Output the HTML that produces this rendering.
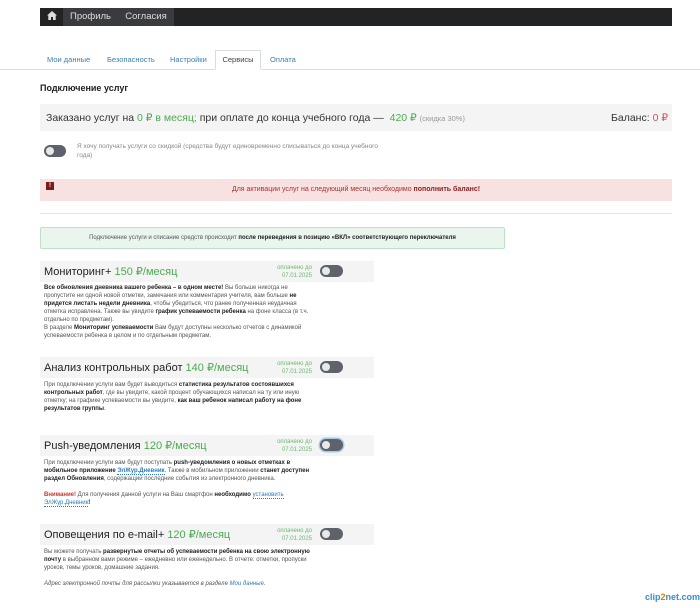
<!DOCTYPE html>
<html><head><meta charset="utf-8"><style>
*{box-sizing:border-box;margin:0;padding:0}
body{width:700px;height:608px;background:#fff;font-family:"Liberation Sans",sans-serif;color:#333;position:relative;overflow:hidden}
.a{position:absolute}
.nav{left:40px;top:8px;width:632px;height:18px;background:#222325}
.nav span{position:absolute;top:0;height:18px;line-height:18px;color:#ddd;font-size:9.5px}
.tabs{top:69px;left:0;width:700px;border-top:1px solid #ddd}
.tab{top:50px;font-size:7.5px;color:#3b7fb0;line-height:20px}
.g{color:#4caa52}
.sh{left:40px;width:334px;height:21px;background:#f4f4f4}
.sh .t{position:absolute;left:4px;top:4px;font-size:11px;color:#222}
.sh .p{position:absolute;right:62px;top:3px;font-size:6px;color:#6bb874;text-align:right;line-height:8px}
.tg{width:23px;height:12px;border-radius:6px;background:#5d626b}
.tg:after{content:"";position:absolute;left:2px;top:2px;width:8px;height:8px;border-radius:50%;background:#e8e8e8}
.sh .tg{position:absolute;left:280px;top:4px}
.bd{left:44px;width:270px;font-size:6px;line-height:8px;color:#555}
.bd b{color:#222}
.lk{color:#2a7bbd;border-bottom:1px dotted #2a7bbd}
</style></head><body>
<div class="a nav">
<span style="left:0;width:23px;text-align:center">
<svg width="10" height="9" viewBox="0 0 10 9" style="vertical-align:-1px"><path d="M5 0L0 4.5h1.3V9h2.7V6h2v3h2.7V4.5H10z" fill="#ddd"/></svg></span>
<span style="left:23px;width:55px;background:#3a3b3e;text-align:center">Профиль</span>
<span style="left:78px;width:56px;background:#3a3b3e;text-align:center">Согласия</span>
</div>
<div class="a tabs"></div>
<div class="a tab" style="left:47px">Мои данные</div>
<div class="a tab" style="left:107px">Безопасность</div>
<div class="a tab" style="left:170px">Настройки</div>
<div class="a tab" style="left:215px;width:46px;height:20px;border:1px solid #ddd;border-bottom:1px solid #fff;background:#fff;color:#444;text-align:center;line-height:18px">Сервисы</div>
<div class="a tab" style="left:270px">Оплата</div>
<div class="a" style="left:40px;top:83px;font-size:9px;font-weight:bold;color:#222">Подключение услуг</div>
<div class="a" style="left:40px;top:104px;width:632px;height:27px;background:#f4f4f4"></div>
<div class="a" style="left:46px;top:112px;font-size:10.5px;color:#333">Заказано услуг на <span class="g">0 ₽ в месяц;</span> при оплате до конца учебного года — <span class="g">&nbsp;420 ₽</span> <span style="font-size:7.5px;color:#999">(скидка 30%)</span></div>
<div class="a" style="right:32px;top:112px;font-size:10.5px;color:#333">Баланс: <span style="color:#d9534f">0 ₽</span></div>
<div class="a tg" style="left:44px;top:145px;width:22px;background:#5d626b"></div>
<div class="a" style="left:77px;top:142px;font-size:6.5px;line-height:9px;color:#888;width:308px">Я хочу получать услуги со скидкой (средства будут единовременно списываться до конца учебного года)</div>
<div class="a" style="left:40px;top:179px;width:632px;height:22px;background:#f8e1e1"></div>
<div class="a" style="left:46px;top:182px;width:8px;height:8px;background:#7a1c1c;color:#fff;font-size:6px;text-align:center;line-height:8px;font-weight:bold">!</div>
<div class="a" style="left:40px;top:186px;width:632px;text-align:center;font-size:7px;color:#a33">Для активации услуг на следующий месяц необходимо <b style="color:#8a1f1f">пополнить баланс!</b></div>
<div class="a" style="left:40px;top:213px;width:632px;border-top:1px solid #e5e5e5"></div>
<div class="a" style="left:40px;top:227px;width:465px;height:22px;background:#eaf5ee;border:1px solid #bfe0c8;border-radius:2px;text-align:center;font-size:6px;line-height:20px;color:#555">Подключение услуги и списание средств происходит <b style="color:#222">после переведения в позицию «ВКЛ» соответствующего переключателя</b></div>

<div class="a sh" style="top:261px"><span class="t">Мониторинг+ <span class="g">150 ₽/месяц</span></span><span class="p">оплачено до<br>07.01.2025</span><span class="tg"></span></div>
<div class="a bd" style="top:284px"><b>Все обновления дневника вашего ребенка – в одном месте!</b> Вы больше никогда не пропустите ни одной новой отметки, замечания или комментария учителя, вам больше <b>не придется листать недели дневника</b>, чтобы убедиться, что ранее полученная неудачная отметка исправлена. Также вы увидите <b>график успеваемости ребенка</b> на фоне класса (в т.ч. отдельно по предметам).<br>В разделе <b>Мониторинг успеваемости</b> Вам будут доступны несколько отчетов с динамикой успеваемости ребенка в целом и по отдельным предметам.</div>

<div class="a sh" style="top:357px"><span class="t">Анализ контрольных работ <span class="g">140 ₽/месяц</span></span><span class="p">оплачено до<br>07.01.2025</span><span class="tg"></span></div>
<div class="a bd" style="top:381px">При подключении услуги вам будет выводиться <b>статистика результатов состоявшихся контрольных работ</b>, где вы увидите, какой процент обучающихся написал на ту или иную отметку; на графике успеваемости вы увидите, <b>как ваш ребенок написал работу на фоне результатов группы</b>.</div>

<div class="a sh" style="top:435px"><span class="t">Push-уведомления <span class="g">120 ₽/месяц</span></span><span class="p">оплачено до<br>07.01.2025</span><span class="tg" style="box-shadow:0 0 0 1.5px #a9c8e8"></span></div>
<div class="a bd" style="top:459px">При подключении услуги вам будут поступать <b>push-уведомления о новых отметках в мобильное приложение <span class="lk">ЭлЖур.Дневник</span></b>. Также в мобильном приложении <b>станет доступен раздел Обновления</b>, содержащий последние события из электронного дневника.<br><br><b style="color:#c0392b">Внимание!</b> Для получения данной услуги на Ваш смартфон <b>необходимо</b> <span class="lk">установить ЭлЖур.Дневник</span><b>!</b></div>

<div class="a sh" style="top:524px"><span class="t">Оповещения по e-mail+ <span class="g">120 ₽/месяц</span></span><span class="p">оплачено до<br>07.01.2025</span><span class="tg"></span></div>
<div class="a bd" style="top:548px">Вы можете получать <b>развернутые отчеты об успеваемости ребенка на свою электронную почту</b> в выбранном вами режиме – ежедневно или еженедельно. В отчете: отметки, пропуски уроков, темы уроков, домашние задания.<br><br><i>Адрес электронной почты для рассылки указывается в разделе <span class="lk" style="border:0">Мои данные</span>.</i></div>
<div class="a" style="left:645px;top:592px;font-size:9px;color:#3a8fc8;font-weight:bold">clip<span style="color:#e07b00">2</span>net.com</div>
</body></html>
